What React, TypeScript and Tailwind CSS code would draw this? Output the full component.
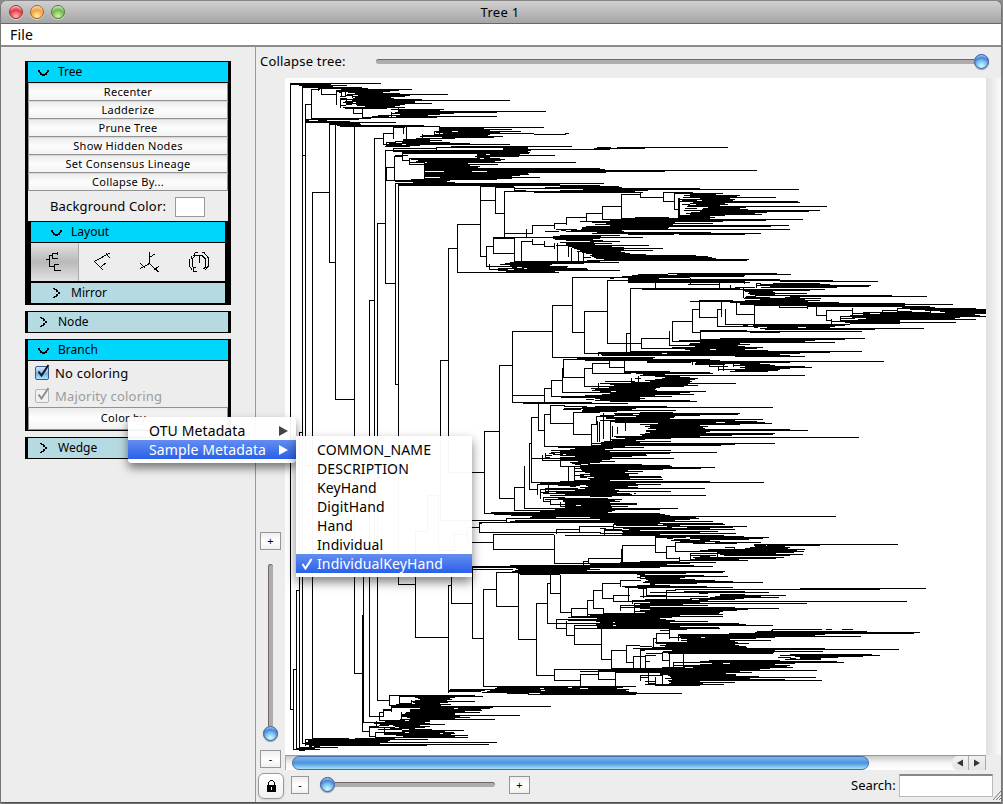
import type { ReactNode } from "react";

// Horizontal branch runs: "y x1 x2 [x1 x2 ...]"
const RUNS = `83 290 381;84 290 331;85 299 347;86 302 333;87 303 362;88 319 368;89 311 320 341 412;90 336 399;91 337 390;92 339 342 348 383;93 355 400;94 321 336 347 448;95 345 352 358 410;96 340 346 352 405;97 355 391;98 340 347 353 394;99 341 422;100 352 510;101 345 415;102 343 353 356 415;103 347 432;104 305 312 346 352 356 405;105 341 346 357 400;106 365 395;107 343 405;108 345 387;109 391 444;110 398 440;111 399 546;112 395 497;113 353 362 391 454;114 400 440;115 378 428;116 372 389 396 497;117 362 437;118 311 371;119 306 359;120 306 309 318 327;121 305 350;122 305 396;123 329 360;124 329 361;125 337 424;126 340 440;127 393 405 439 544;128 439 484;129 440 512;130 440 490;131 434 452 458 521;132 436 500;133 383 393 443 534 565 569;134 434 490 534 566;135 422 488;136 420 503;137 442 494;138 374 383 416 455;139 403 430;140 403 442;141 395 430;142 386 396 402 450;143 389 470;144 383 402 406 510;145 386 420;146 385 410 451 572;147 437 528 597 611 617 728;148 393 437 503 528 594 645;149 503 610;150 385 531;151 393 528;152 402 530;153 402 529;154 477 486 490 520;155 395 408 477 555;156 394 402 475 519;157 477 490;158 410 480 484 500;159 411 505;160 402 409 418 501;161 416 495;162 409 424 427 576;163 424 468;164 409 498;165 425 470;166 425 480;167 386 394 424 478;168 424 600;169 424 605;170 425 757;171 444 472 487 665;172 425 606;173 425 528;174 425 529;175 425 520;176 425 512;177 440 540;178 424 512;179 411 497;180 386 450;181 395 447;182 413 455;183 395 604;184 398 560;185 398 600;186 480 514 560 619;187 495 514 545 622;188 514 700;189 583 799;190 514 526 560 648;191 504 635;192 534 643 663 693;193 674 723;194 621 640 690 716;195 684 740;196 690 737;197 640 663 683 776;198 700 730;199 678 735;200 480 495 682 697 702 733;201 663 674 678 798;202 693 800;203 690 725;204 682 690 696 728;205 688 720;206 602 621 687 827;207 708 746;208 685 697 703 740;209 674 678 702 748;210 684 820;211 700 809;212 691 767;213 495 504 586 602 686 755;214 690 762;215 680 725;216 679 710;217 566 586 635 669 680 715;218 621 710;219 602 803;220 610 766;221 580 723;222 592 675;223 554 566 606 713;224 457 480 595 673;225 532 554 610 789;226 586 771;227 582 669;228 582 668;229 556 577 581 790;230 561 566 571 622;231 545 559 566 624;232 597 711;233 504 532 592 761;234 628 674 679 745;235 560 620;236 553 601;237 493 643;238 493 514 553 600;239 555 593;240 566 603;241 521 532 590 620;242 560 594;243 566 612;244 532 544 566 595;245 556 649;246 486 493 544 554 568 612;247 572 624;248 448 457 574 663;249 577 624;250 580 653;251 577 621;252 582 625;253 493 514 586 630;254 592 646;255 590 696;256 480 486 592 708;257 584 591 594 712;258 596 716;259 604 749;260 587 747;261 514 600;262 510 619;263 505 583;264 500 552;265 510 550;266 486 568;267 512 517 522 567;268 498 524 527 587;269 489 508 514 588;270 499 620;271 506 555;272 457 559;273 668 777;274 638 668 677 791;275 632 745;276 622 744;277 572 690;278 610 614 628 659;279 628 780;280 607 833;281 628 744 780 878;282 628 750;283 756 761 773 820;284 688 719 760 830;285 757 871;286 770 869;287 735 755 761 837;288 630 740;289 642 825;290 743 810;291 745 773;292 749 775;293 748 807;294 750 775;295 755 892;296 746 756 790 927;297 745 770 785 800;298 744 821;299 760 805;300 699 733 745 820;301 690 808;302 730 839;303 740 905;304 740 953;305 552 572 754 905;306 807 930;307 779 807 902 935;308 897 976;309 692 699 717 721 910 986;310 826 852 882 897 925 986;311 584 607 897 911 940 986;312 863 930 945 986;313 852 870 880 986;314 736 754 863 975;315 816 826 850 980;316 840 986;317 699 717 852 960;318 840 855 866 955;319 858 976;320 826 831 840 900;321 672 692 831 900;322 845 956;323 850 900;324 725 850;325 743 748 753 845;326 717 835;327 754 758 767 798 806 830;328 760 924;329 765 875;330 700 747;331 700 862;332 572 584 692 700 750 780;333 626 630;338 641 669 720 865;339 700 845;340 679 815;341 672 805;342 700 835;343 607 641 690 740;344 689 750;345 670 738;346 695 745;347 672 763;348 641 757;349 685 710 716 745;350 690 768;351 630 862;352 598 830;353 584 662 667 800;354 601 780;355 602 790;356 735 805;357 552 655;358 577 653;359 563 710;360 585 720;361 647 884;362 647 691 696 790;363 592 609 695 760;364 695 725 740 770;365 499 512 733 775;366 710 728 745 805;367 609 624 740 812;368 584 592 745 790;369 718 780;370 735 778;371 624 670 730 768;372 624 710;373 592 631 636 713;374 643 665;375 640 805;376 655 680;377 563 584 665 690;378 635 641 662 698;379 655 695;380 551 562 645 690;381 605 635 650 692;382 632 690;383 600 736;384 610 688;385 614 698;386 584 684;387 609 660;388 544 551 591 656;389 595 655;390 592 657;391 600 611 616 706;392 563 690;393 610 680;394 602 694;395 512 544 585 655;396 551 672;397 561 640;398 595 645;399 586 594 600 640;400 595 690;401 610 697;402 512 592;403 523 628;405 550 565;406 564 587 595 667;407 582 773;408 564 636;409 563 581 583 632;410 582 676;411 582 617;412 573 600 640 673;413 614 740;414 544 550 615 633 639 738;415 600 700;416 596 614 636 675;417 531 538 606 674;418 606 670;419 615 763;420 600 735;421 610 757;422 615 716 725 765;423 550 573 658 772;424 591 597 640 740;425 650 700;426 645 708;427 650 703;428 648 705;429 656 790;430 538 544 646 808;431 484 499 646 710;432 650 706;433 645 775;434 573 591 640 773;435 642 732;436 614 700;437 616 859;438 625 671;439 610 645;440 612 636;441 604 671;442 601 640;443 529 531 591 775;444 601 735;445 591 721;446 544 625;447 558 644;448 575 613;449 570 605;450 551 671;451 560 610;452 551 717;453 549 555 560 670;454 553 563 566 646;455 545 552 560 647;456 575 632;457 545 550 560 612;458 531 674;459 560 610;460 542 602;461 578 615;462 570 600;463 572 590;464 575 580 588 642;465 581 670;466 560 672;467 580 715;468 575 701;469 581 663;470 582 628;471 574 643;472 448 484 585 625;473 590 638;474 580 629;475 574 584 590 629;476 580 661;477 580 587 594 662;478 588 630;479 590 663;480 574 610;481 560 710;482 531 764;483 540 636;484 537 661;485 558 580 586 638;486 570 576 588 628;487 514 524 580 638;488 545 578 585 705;489 529 537 540 615;490 575 619;491 545 671;492 541 548 556 617;493 543 630 634 636;494 565 632;495 550 706;496 590 612;497 543 565;498 499 514 558 608;499 545 622;500 563 615;501 544 551 563 620;502 565 610;503 565 637;504 551 637;505 565 576 581 611;506 560 628;507 565 612;508 524 678;509 555 660;510 514 615;511 540 612;512 491 608;513 484 660;514 494 665;515 511 670;516 533 836;517 530 556 590 696;518 506 699;519 600 690;520 472 506 515 675;521 510 713;522 480 660;523 479 482 614 723;524 614 658 663 725;525 616 680;526 579 613 667 747;527 472 479 614 672 687 733;528 600 606 623 710;529 556 579 605 622 629 735;530 604 640;531 622 718;532 479 601 623 700;533 600 736;534 493 554 622 660;535 565 724;536 655 744;537 655 686 690 769;538 667 673 690 763;539 674 690 700 749;540 671 710;541 680 720;542 472 493 675 705 715 761;543 693 737;544 754 898;545 622 655 754 765 767 820;546 666 675 755 785;547 725 734 750 790;548 745 788;549 493 554 708 805;550 700 797;551 675 804;552 655 666 717 794;553 690 776;554 720 803;555 690 716 724 790;556 700 710;557 693 784;558 588 621 666 679 695 776;559 690 739;560 680 748;561 583 588 640 680;562 620 716;563 554 690;564 590 667;565 510 694;566 472 713;567 472 660;568 516 590;569 472 513 518 600;570 515 587;571 512 725;572 496 723;573 518 686;574 520 560 637 645;575 640 704;576 640 728;577 637 641 645 685;578 640 680;579 646 695;580 620 641 648 715;581 645 733;582 643 763;583 547 550 602 620 650 697;584 650 655;585 448 451 637 670;586 622 707;587 625 733;588 638 646 800 926;589 483 496 675 880;590 593 602 666 676;591 684 745;592 650 769;593 550 560 699 708;594 720 745;595 613 630 646 666 720 786;596 640 708 715 761;597 710 779;598 602 613 690 744;599 645 692 699 735;600 587 593 632 708;601 613 907;602 650 700;603 451 472 536 547 634 807;604 640 683;605 621 708;606 496 518 634 650;607 620 735;608 571 587 593 603 640 779;609 650 748;610 640 737;611 634 723;612 560 571 645 720;613 603 719;614 587 723;615 590 680;616 571 723;617 568 672;618 597 660;619 556 666;620 568 675;621 596 708;622 600 613 615 670;623 547 739;624 596 746;625 574 613 616 773;626 597 680;627 597 719;628 556 566 574 720;629 669 687 772 822 826 832 842 853;630 660 669 771 773;631 757 867;632 755 920;633 656 669 729 755 742 914;634 678 825;635 566 574 678 815;636 680 861;637 669 701 705 775;638 472 483 653 656 681 756;639 518 536 687 730;640 681 771;641 687 735;642 655 738;643 656 749;644 574 601 666 735;645 626 640 660 739;646 640 652 665 746;647 652 747;648 633 825;649 640 899;650 611 626 640 645 672 775;651 663 823;652 662 774;653 646 662 668 773;654 790 872;655 645 656 780 880;656 633 645 795 863;657 778 791 800 838;658 790 796 800 821;659 601 611 785 821;660 662 669 709 780;661 645 650 700 837;662 626 633 674 844;663 712 723 730 795;664 700 775;665 674 790;666 683 787;667 662 685 693 793;668 611 770;669 554 760;670 598 817;671 580 740;672 615 752;673 660 726;674 580 598 660 736;675 536 554 640 662 668 736;676 670 759;677 640 648 671 816;678 665 750;679 598 615 672 785;680 554 580 668 822;681 645 655 669 700;682 671 735;683 648 655 669 703;684 645 724;685 655 700;686 483 636;687 497 568 572 623;688 495 540 544 580 588 617;689 450 629;690 448 485 490 541 545 626;691 448 481 487 629;692 482 637;693 507 529 540 682;694 528 636;695 389 475;696 400 483;697 415 455;698 418 450;699 420 452;700 377 389 415 447;701 411 475;702 413 448;703 400 411 415 440;704 396 451;705 389 441;706 391 551;707 391 493;708 420 454 458 490;709 290 293 383 391 410 481;710 383 391 410 482;711 410 465;712 379 383 406 480;713 405 455;714 401 455;715 402 520;716 369 384 401 460;717 407 470;718 410 455;719 400 495;720 379 405 409 430;721 385 430;722 363 425;723 374 430;724 380 445;725 379 389 393 420;726 369 379 395 430;727 370 395 399 425;728 390 415;729 378 402 409 432;730 402 464;731 362 369 402 445;732 375 405 409 454;733 384 440 443 455;734 384 451;735 396 468;736 369 375 403 455;737 375 468;738 312 349 355 395;739 305 428;740 308 390;741 308 388;742 305 497;743 302 380;744 305 489;745 309 427;746 310 312 314 320;747 299 338;748 296 315;749 293 320;750 299 305;155 302 305;192 312 329;262 329 335;399 335 354;673 354 362;300 369 374;138 374 383;223 377 385;283 385 395;384 395 398;584 398 415;637 415 448;360 440 448;520 440 480;495 427 438;531 415 427;550 438 454;534 454 467;527 467 479;542 467 493;432 299 302;465 305 312;590 296 299;669 293 296;331 512 552`;

// Vertical connectors: "x y1 y2"
const STEMS = `290 83 709;293 669 749;296 590 748;299 432 748;302 87 743;305 104 465;312 192 738;329 123 262;335 123 399;354 126 673;362 615 731;363 560 722;369 300 716;374 138 560;377 223 700;385 150 283;395 183 384;398 184 584;415 531 637;427 495 531;438 495 550;440 360 520;454 534 550;467 527 542;448 248 472;448 585 692;457 224 272;480 184 256;495 187 213;504 191 238;514 187 190;493 238 253;514 238 262;486 246 266;489 264 269;498 268 270;521 241 262;532 239 244;544 241 246;554 243 248;557 243 261;568 246 256;571 248 262;578 252 262;583 252 263;526 229 237;532 225 233;554 223 228;566 217 224;586 213 221;602 206 219;621 194 219;640 192 197;663 192 201;674 192 209;678 198 217;679 198 217;311 89 118;318 88 90;321 89 94;336 90 104;341 91 95;345 92 96;352 94 97;340 98 107;346 100 103;353 107 113;362 108 118;391 112 116;398 108 113;383 133 144;393 127 138;403 127 133;406 127 138;439 127 133;434 131 136;422 134 138;386 142 146;436 147 151;393 148 151;394 156 180;402 152 160;409 158 164;424 161 177;386 168 180;484 431 513;499 365 498;512 331 402;552 305 357;572 277 332;584 311 353;607 280 343;626 333 352;630 288 351;598 352 355;544 388 402;551 380 396;562 368 392;563 359 377;584 368 386;592 363 373;609 360 367;624 361 372;598 383 390;631 378 383;638 376 382;538 403 430;544 414 446;550 405 423;573 412 434;591 424 446;597 421 441;599 422 441;603 420 438;610 421 441;612 426 436;617 427 433;625 422 430;596 416 424;603 413 419;531 417 482;529 443 489;524 466 508;514 487 510;542 455 460;545 453 457;560 460 466;568 466 481;574 466 480;580 464 468;537 484 494;540 490 498;545 488 492;548 485 492;543 497 501;550 499 504;560 502 506;506 518 521;532 513 516;556 529 533;579 526 531;479 522 532;604 528 534;613 524 528;604 530 533;493 534 549;554 535 563;583 561 564;588 558 562;621 549 562;622 545 562;655 537 552;666 546 558;675 542 551;679 557 560;690 553 558;717 553 559;734 547 549;765 544 546;472 566 638;451 570 603;483 589 686;496 572 606;518 573 639;536 603 675;547 583 623;550 574 593;560 575 612;571 608 616;587 600 615;593 590 608;602 583 598;613 595 601;603 608 613;620 580 586;628 587 600;643 587 597;646 587 595;666 590 600;632 600 603;620 605 610;634 603 612;556 619 628;566 621 635;574 625 644;601 628 659;611 650 668;626 645 662;633 656 668;640 651 668;645 655 668;653 638 647;656 633 643;669 629 638;678 634 640;662 652 660;669 653 667;683 654 667;673 662 667;648 672 683;655 680 685;662 674 685;554 669 680;580 674 686;598 670 679;615 672 685;655 677 684;640 675 680;672 675 684;389 695 705;399 695 703;411 700 705;379 712 720;383 709 716;391 706 711;401 712 720;369 726 736;375 732 738;384 727 734;376 721 726;305 739 745;309 740 746;692 309 332;699 300 317;672 321 341;700 331 339;669 331 345;641 338 348;717 309 326;721 302 316;725 309 324;736 303 314;754 305 324;779 303 307;807 305 308;816 306 315;826 310 320;831 319 323;840 316 320;852 308 314;882 310 315;897 308 312;911 311 314;930 311 313;692 360 364;709 362 366;723 362 370;733 363 366;718 366 370;743 288 297;756 283 287;774 283 286;690 278 284;730 285 288;719 283 287;655 283 288;628 278 282;744 280 283`;

const nums = (s: string) => s.trim().split(" ").map(Number);

const runPath = RUNS.split(";")
  .map((row) => {
    const [y, ...xs] = nums(row);
    let d = "";
    for (let i = 0; i + 1 < xs.length; i += 2) {
      if (xs[i + 1] > xs[i]) d += `M${xs[i]} ${y + 0.5}H${xs[i + 1]}`;
    }
    return d;
  })
  .join("");

const stemPath = STEMS.split(";")
  .map((row) => {
    const [x, a, b] = nums(row);
    return `M${x + 0.5} ${a}V${b + 1}`;
  })
  .join("");

function Phylogeny() {
  return (
    <svg className="block h-[677px] w-[701px] bg-white" viewBox="285 78 701 677" shapeRendering="crispEdges">
      <path d={runPath + stemPath} stroke="#000" strokeWidth="1" fill="none" />
    </svg>
  );
}

function Chevron({ open }: { open: boolean }) {
  return (
    <svg className="block h-3 w-3 shrink-0" viewBox="0 0 12 12" shapeRendering="crispEdges">
      {open ? (
        <path d="M0 4h2v2H0zM1 6h2v1H1zM2 7h2v2H2zM4 8h3v2H4zM7 7h2v2H7zM8 6h2v1H8zM9 4h2v2H9z" />
      ) : (
        <path d="M2 1h2v1H2zM3 2h3v1H3zM5 3h2v2H5zM7 5h2v2H7zM5 7h2v2H5zM3 9h3v1H3zM2 10h2v1H2z" />
      )}
    </svg>
  );
}

function Header({ label, open, nested }: { label: string; open: boolean; nested?: boolean }) {
  return (
    <div
      className={`flex h-5 items-center gap-2 text-[12px] leading-5 ${open ? "bg-[#00d5fb]" : "bg-[#b6dae2]"} ${
        nested ? "pl-5" : "pl-[10px]"
      }`}
    >
      <Chevron open={open} />
      <span>{label}</span>
    </div>
  );
}

function PanelButton({ children }: { children: ReactNode }) {
  return (
    <div className="flex h-[18px] items-center justify-center border border-t-[#d8d8d8] border-r-[#929292] border-b-[#929292] border-l-[#929292] bg-linear-to-b from-[#ececec] via-[#fdfdfd] to-[#f3f3f3] pb-[2px] text-[11px] leading-none tracking-[0.3px]">
      {children}
    </div>
  );
}

function CheckBox({ label, disabled }: { label: string; disabled?: boolean }) {
  return (
    <div className={`flex h-[23px] items-center gap-1 pl-[7px] text-[13px] leading-none ${disabled ? "text-[#9c9c9c]" : "text-black"}`}>
      <svg className="block h-4 w-4 shrink-0 overflow-visible" viewBox="0 0 16 16">
        <defs>
          <linearGradient id="check-on" x1="0" y1="0" x2="0" y2="1">
            <stop offset="0" stopColor="#dbeafc" />
            <stop offset=".48" stopColor="#8dbbee" />
            <stop offset=".5" stopColor="#68aaef" />
            <stop offset="1" stopColor="#b8eaff" />
          </linearGradient>
        </defs>
        <rect x=".5" y="1.5" width="13" height="13" rx="1.5" fill={disabled ? "#f1f1f1" : "url(#check-on)"} stroke={disabled ? "#b5b5b5" : "#39598e"} />
        <path d="M3.500 6.500L6.500 10.500L13.500 0" fill="none" stroke={disabled ? "#909090" : "#15191f"} strokeWidth="2" />
      </svg>
      <span className="pt-[2px] tracking-[0.2px]">{label}</span>
    </div>
  );
}

const layoutIcons = [
  "M2 9.5h3M5.5 5v12M5 5.5h3M8.5 3v6M8 3.5h6M13.5 2v3M8 8.500h6M5 16.5h5M10.5 14v7M10 14.5h5M10 20.5h7",
  "M1.500 11.500L16.500 3M13 3.500L17 8M1.500 11.500L10.500 20.500M7.500 17.500L12.500 13",
  "M10.500 2v12M10.500 7.500L16.500 3.500M10.500 13.500L1.500 18.500M1.500 13.500L6 18M10.500 13.500L19.500 22M15 19.500L20 16.500",
  "M7 2.500h3M6.500 3v2M4.500 5.500h2M3.500 6v3M1.500 8.500v8M1.500 16.500L4 19.500M7 5.500h7M11.500 6v7M4.500 8.500v8M4.500 9L7 5.500M14 2.500h2L20.500 8v8L16.500 20.500M14 5.500L17.500 9v8l-2 2M5 17v4h4M6 17.500h2",
];

function LayoutIcons() {
  return (
    <div className="grid h-[38px] grid-cols-[48px_49px_48px_49px] bg-[#ededed]">
      {layoutIcons.map((d, i) => (
        <div
          key={d}
          className={`flex items-center justify-center ${
            i === 0 ? "border-r border-[#aaa] bg-linear-to-b from-[#e2e2e2] via-[#b9b9b9] to-[#e2e2e2]" : i === 1 ? "" : "pr-1"
          }`}
        >
          <svg className="block h-6 w-[22px]" viewBox="0 0 22 24" shapeRendering="crispEdges">
            <path d={d} fill="none" stroke="#000" />
          </svg>
        </div>
      ))}
    </div>
  );
}

function Sidebar() {
  return (
    <aside className="flex w-[255px] shrink-0 flex-col gap-[6px] border-r border-[#999] bg-[#ededed] pt-[14px] pl-6">
      <section className="w-[206px] border-x-[3px] border-t border-b border-black">
        <Header label="Tree" open />
        <div className="border-t border-black">
          {["Recenter", "Ladderize", "Prune Tree", "Show Hidden Nodes", "Set Consensus Lineage", "Collapse By..."].map((t) => (
            <PanelButton key={t}>{t}</PanelButton>
          ))}
        </div>
        <div className="flex h-[30px] items-center pt-px pl-[22px] text-[13px]">
          <span className="w-[125px] whitespace-nowrap tracking-[0.15px]">Background Color:</span>
          <span className="h-5 w-[30px] border border-[#999] bg-white" />
        </div>
        <div className="border-x-[3px] border-t border-b border-black">
          <Header label="Layout" open nested />
          <div className="border-t border-b-2 border-black">
            <LayoutIcons />
          </div>
          <Header label="Mirror" open={false} nested />
        </div>
      </section>
      <section className="w-[206px] border-x-[3px] border-y border-black">
        <Header label="Node" open={false} />
      </section>
      <section className="w-[206px] border-x-[3px] border-y border-black">
        <Header label="Branch" open />
        <div className="border-t border-black bg-[#ededed]">
          <CheckBox label="No coloring" />
          <CheckBox label="Majority coloring" disabled />
          <div className="flex h-[23px] items-center justify-center border border-[#929292] bg-linear-to-b from-[#ececec] via-white to-[#f3f3f3] text-[11px] tracking-[0.3px]">
            Color by...
          </div>
        </div>
      </section>
      <section className="w-[206px] border-x-[3px] border-y border-black">
        <Header label="Wedge" open={false} />
      </section>
    </aside>
  );
}

function Knob() {
  return (
    <span className="block h-[15px] w-[15px] shrink-0 rounded-full border border-[#304f9e] bg-[radial-gradient(circle_at_50%_85%,#c8f6ff_5%,#74b9ee_45%,#4586d5_65%,#b9d9f5_90%)] shadow-[0_1px_1px_rgba(0,0,0,.35)]" />
  );
}

function SmallButton({ children }: { children: ReactNode }) {
  return (
    <span className="flex h-[18px] shrink-0 items-center justify-center border border-[#979797] bg-linear-to-b from-[#eee] via-white to-[#f0f0f0] pb-px text-[11px] leading-none">
      {children}
    </span>
  );
}

function ZoomColumn() {
  return (
    <div className="flex w-[29px] shrink-0 flex-col pt-[454px] pl-1">
      <div className="grid w-[21px]">
        <SmallButton>+</SmallButton>
      </div>
      <div className="mt-[14px] ml-2 h-[162px] w-[5px] rounded-t-full border-t border-l border-[#706868] bg-[#b0acac]" />
      <div className="ml-[3px]">
        <Knob />
      </div>
      <div className="mt-[9px] grid w-[21px]">
        <SmallButton>-</SmallButton>
      </div>
    </div>
  );
}

function HorizontalScroll() {
  return (
    <div className="flex h-[15px] w-[701px] border-t border-[#999] bg-linear-to-b from-[#c9c9c9] via-[#f5f5f5] to-white">
      <div className="w-[7px] border-l border-[#aaa]" />
      <div className="h-[14px] w-[577px] rounded-full border border-[#3f6db0] bg-linear-to-b from-[#86b4e6] via-[#4894df] via-50% to-[#a7e2fa]" />
      <div className="flex-1" />
      <div className="flex w-[17px] items-center justify-center rounded-l-md border-r border-[#aaa] bg-linear-to-b from-[#f2f2f2] to-[#e4e4e4]">
        <svg className="h-2 w-2" viewBox="0 0 8 8">
          <path d="M7 .5v7L1 4z" fill="#333" />
        </svg>
      </div>
      <div className="flex w-[17px] items-center justify-center border-r border-[#aaa] bg-linear-to-b from-[#f2f2f2] to-[#e4e4e4]">
        <svg className="h-2 w-2" viewBox="0 0 8 8">
          <path d="M1 .5v7L7 4z" fill="#333" />
        </svg>
      </div>
    </div>
  );
}

function BottomBar() {
  return (
    <div className="flex h-8 items-start pl-[2px]">
      <span className="mt-[3px] flex h-[26px] w-[26px] items-center justify-center rounded-md border border-[#999] bg-linear-to-b from-white to-[#f1f1f1] shadow-sm">
        <svg className="h-3 w-[9px]" viewBox="0 0 9 12" shapeRendering="crispEdges">
          <path d="M0 5h1V2h1V1h1V0h3v1h1v1h1v3h1v7H0zM2 5h5V2H6V1H3v1H2zM4 7v3h1V7z" fillRule="evenodd" />
        </svg>
      </span>
      <div className="mt-[6px] ml-[7px] grid w-[18px]">
        <SmallButton>-</SmallButton>
      </div>
      <div className="mt-[7px] ml-[11px] flex items-center">
        <Knob />
        <span className="h-[5px] w-[160px] rounded-r-full border-t border-[#706868] bg-[#b0acac]" />
      </div>
      <div className="mt-[6px] ml-[14px] grid w-[21px]">
        <SmallButton>+</SmallButton>
      </div>
      <span className="mt-[6px] ml-auto w-[48px] text-[13px] leading-[18px] whitespace-nowrap">Search:</span>
      <span className="mt-1 h-[23px] w-[94px] border border-t-2 border-[#bbb] border-t-[#888] bg-white" />
      <svg className="mt-[18px] h-[12px] w-2" viewBox="0 0 8 12">
        <path d="M0 12L8 3M3 12L8 7M6 12l2-2" stroke="#777" />
      </svg>
    </div>
  );
}

function MenuRow({ children, active, checked, arrow }: { children: ReactNode; active?: boolean; checked?: boolean; arrow?: boolean }) {
  return (
    <div className={`flex h-[19px] items-center text-[14px] leading-[19px] ${active ? "bg-linear-to-b from-[#648df0] to-[#295fea] text-white" : "text-black"}`}>
      <span className="flex w-[21px] shrink-0 justify-center">
        {checked && (
          <svg className="h-3 w-3" viewBox="0 0 12 12">
            <path d="M1.500 6L4.500 10.500L10.500 1" fill="none" stroke="#fff" strokeWidth="2" />
          </svg>
        )}
      </span>
      <span className="tracking-[0.12px] whitespace-nowrap">{children}</span>
      {arrow && (
        <svg className="mr-2 ml-auto h-[10px] w-[9px]" viewBox="0 0 9 10">
          <path d="M0 0v10L9 5z" fill={active ? "#fff" : "#444"} />
        </svg>
      )}
    </div>
  );
}

const fields = ["COMMON_NAME", "DESCRIPTION", "KeyHand", "DigitHand", "Hand", "Individual"];

export default function App() {
  return (
    <div className="relative h-[804px] w-[1003px] overflow-hidden bg-[#8b8b8b] font-['Noto_Sans','Open_Sans',sans-serif] text-black">
      <div className="mt-px ml-px flex h-[801px] w-[1000px] flex-col rounded-t-md bg-[#ededed] shadow-[0_1px_2px_rgba(0,0,0,.6)]">
        <div className="flex h-[23px] shrink-0 items-center rounded-t-md border-b border-[#686868] bg-linear-to-b from-[#d0d0d0] to-[#a5a5a5]">
          <div className="flex w-[100px] gap-[7px] pl-2">
            <span className="h-[14px] w-[14px] rounded-full border border-[#9b3438] bg-[radial-gradient(circle_at_50%_85%,#ffb5b8,#e33a43_55%,#f6c5c5_85%)] shadow-[0_1px_0_rgba(255,255,255,.5)]" />
            <span className="h-[14px] w-[14px] rounded-full border border-[#a4682f] bg-[radial-gradient(circle_at_50%_85%,#fff2a2,#f2a042_55%,#f8ddb5_85%)] shadow-[0_1px_0_rgba(255,255,255,.5)]" />
            <span className="h-[14px] w-[14px] rounded-full border border-[#4d7d37] bg-[radial-gradient(circle_at_50%_85%,#d6f5a9,#71b64e_55%,#d3eac7_85%)] shadow-[0_1px_0_rgba(255,255,255,.5)]" />
          </div>
          <div className="flex-1 pt-px pr-[102px] text-center text-[13px] leading-none tracking-[0.3px]">Tree 1</div>
        </div>
        <div className="h-[23px] shrink-0 border-b-2 border-[#8c8c8c] bg-white pl-[9px] text-[14px] leading-[21px] tracking-[0.2px]">File</div>
        <div className="flex min-h-0 flex-1">
          <Sidebar />
          <main className="flex min-w-0 flex-1 flex-col">
            <div className="flex h-[31px] shrink-0 items-center pb-[2px] pl-1 text-[13px]">
              <span className="w-[116px] tracking-[0.2px]">Collapse tree:</span>
              <span className="h-[5px] w-[598px] rounded-l-full border-t border-[#706868] bg-[#b0acac]" />
              <Knob />
            </div>
            <div className="flex h-[692px] shrink-0">
              <ZoomColumn />
              <div className="flex flex-col">
                <Phylogeny />
                <HorizontalScroll />
              </div>
              <div className="h-[677px] flex-1 bg-linear-to-r from-[#e0e0e0] to-[#fafafa]" />
            </div>
            <BottomBar />
          </main>
        </div>
      </div>

      <div className="absolute top-[417px] left-[128px] w-[168px] rounded-[4px] bg-white/95 pt-1 pb-1 shadow-[0_5px_10px_rgba(0,0,0,.5)]">
        <MenuRow arrow>OTU Metadata</MenuRow>
        <MenuRow arrow active>
          Sample Metadata
        </MenuRow>
      </div>
      <div className="absolute top-[436px] left-[296px] w-[176px] bg-white/97 pt-1 pb-1 shadow-[0_5px_10px_rgba(0,0,0,.5)]">
        {fields.map((f) => (
          <MenuRow key={f}>{f}</MenuRow>
        ))}
        <MenuRow active checked>
          IndividualKeyHand
        </MenuRow>
      </div>
    </div>
  );
}
